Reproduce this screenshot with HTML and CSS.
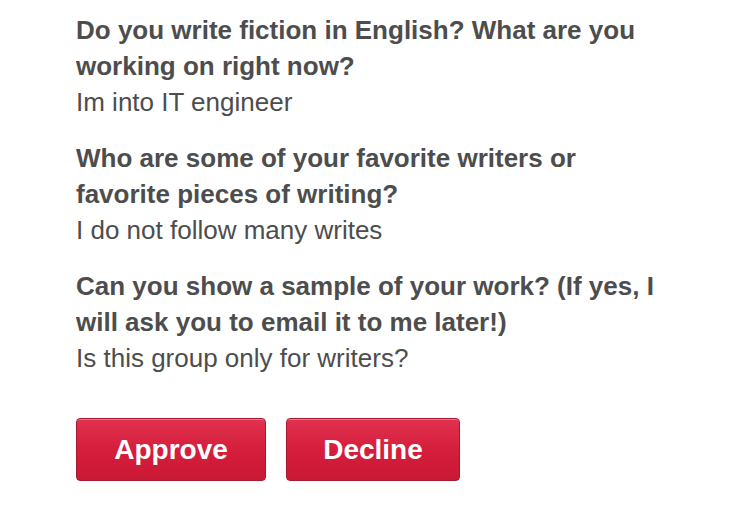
FILE: index.html
```html
<!DOCTYPE html>
<html>
<head>
<meta charset="utf-8">
<link rel="stylesheet" href="styles.css">
</head>
<body>
<div class="page">
  <div class="qa">
    <div class="q">Do you write fiction in English? What are you working on right now?</div>
    <div class="a">Im into IT engineer</div>
  </div>
  <div class="qa">
    <div class="q">Who are some of your favorite writers or favorite pieces of writing?</div>
    <div class="a">I do not follow many writes</div>
  </div>
  <div class="qa">
    <div class="q">Can you show a sample of your work? (If yes, I will ask you to email it to me later!)</div>
    <div class="a">Is this group only for writers?</div>
  </div>
  <div class="actions">
    <button class="btn approve">Approve</button>
    <button class="btn decline">Decline</button>
  </div>
</div>
</body>
</html>
```
FILE: styles.css
```css
html, body {
  margin: 0;
  padding: 0;
  background: #ffffff;
}
.page {
  width: 588px;
  padding: 12px 0 0 76px;
  font-family: "Liberation Sans", Arial, sans-serif;
  color: #4d4d4d;
  font-size: 26px;
  line-height: 36px;
}
.qa {
  margin-bottom: 20px;
}
.q {
  font-weight: bold;
}
.a {
  font-weight: normal;
}
.actions {
  display: flex;
  gap: 20px;
  margin-top: 42px;
}
.btn {
  height: 63px;
  padding: 0;
  border: 1px solid #a51a30;
  border-radius: 4px;
  background: linear-gradient(#e0324f, #d51e3c 50%, #c91935);
  box-shadow: inset 0 1px 0 rgba(255,255,255,0.35);
  color: #ffffff;
  font-family: "Liberation Sans", Arial, sans-serif;
  font-weight: bold;
  font-size: 28px;
}
.approve {
  width: 190px;
}
.decline {
  width: 174px;
}
```
